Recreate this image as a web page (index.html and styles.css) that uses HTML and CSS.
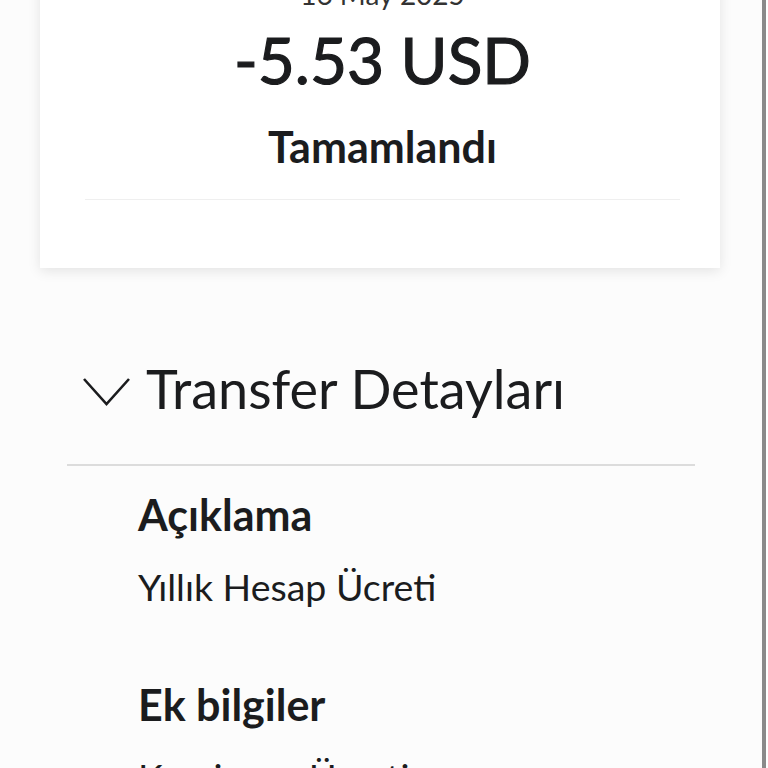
FILE: index.html
```html
<!DOCTYPE html>
<html lang="tr">
<head>
    <meta charset="UTF-8">
    <meta name="viewport" content="width=device-width, initial-scale=1.0">
    <title>İşlem Detayı</title>
    <link rel="stylesheet" href="styles.css">
</head>
<body>

<div class="page">
    <div class="summary-card">
        <div class="summary-date">16 May 2025</div>
        <div class="summary-amount">-5.53 USD</div>
        <div class="summary-status">Tamamlandı</div>
        <hr class="summary-divider">
    </div>

    <div class="details">
        <div class="details-header">
            <svg class="chevron" width="50" height="30" viewBox="0 0 50 30">
                <polyline points="2,2 24.5,27 47,2" fill="none" stroke="#1b1c1e" stroke-width="2.6"/>
            </svg>
            <h2>Transfer Detayları</h2>
        </div>
        <hr class="details-divider">

        <div class="detail-item">
            <div class="detail-label">Açıklama</div>
            <div class="detail-value">Yıllık Hesap Ücreti</div>
        </div>

        <div class="detail-item">
            <div class="detail-label">Ek bilgiler</div>
            <div class="detail-value">Komisyon Ücreti</div>
        </div>
    </div>
</div>

</body>
</html>
```

FILE: styles.css
```css
body {
    margin: 0;
    background-color: #ffffff;
    font-family: Lato, "Open Sans", sans-serif;
    color: #1b1c1e;
    overflow: hidden;
}
.page {
    width: 762px;
    height: 768px;
    background-color: #fcfcfc;
    border-right: 4px solid #8a8a8a;
    overflow: hidden;
}
.summary-card {
    margin: -22px 0 0 40px;
    width: 680px;
    padding: 0 40px 68px 45px;
    box-sizing: border-box;
    background-color: #ffffff;
    box-shadow: 0 3px 12px rgba(0, 0, 0, 0.10);
    text-align: center;
}
.summary-date {
    font-size: 28px;
    line-height: 32px;
    color: #333;
}
.summary-amount {
    margin-top: 14px;
    font-size: 64px;
    line-height: 72px;
    -webkit-text-stroke: 1.2px #1b1c1e;
}
.summary-status {
    margin-top: 27px;
    font-size: 43px;
    line-height: 48px;
    font-weight: bold;
}
.summary-divider {
    margin: 28px 0 0 0;
    border: none;
    border-top: 1px solid #efefef;
}
.details {
    padding: 89px 67px 0 67px;
}
.details-header {
    display: flex;
    align-items: center;
    gap: 14px;
    padding-left: 15px;
}
.chevron {
    margin-top: 6px;
}
.details-header h2 {
    margin: 0;
    font-size: 54px;
    line-height: 64px;
    font-weight: normal;
}
.details-divider {
    margin: 43px 0 0 0;
    border: none;
    border-top: 2px solid #dcdcdc;
}
.detail-item {
    padding-left: 71px;
    margin-top: 24px;
}
.detail-item + .detail-item {
    margin-top: 71px;
}
.detail-label {
    font-size: 43px;
    line-height: 50px;
    font-weight: bold;
}
.detail-value {
    margin-top: 25px;
    font-size: 37.5px;
    line-height: 44px;
}
```
